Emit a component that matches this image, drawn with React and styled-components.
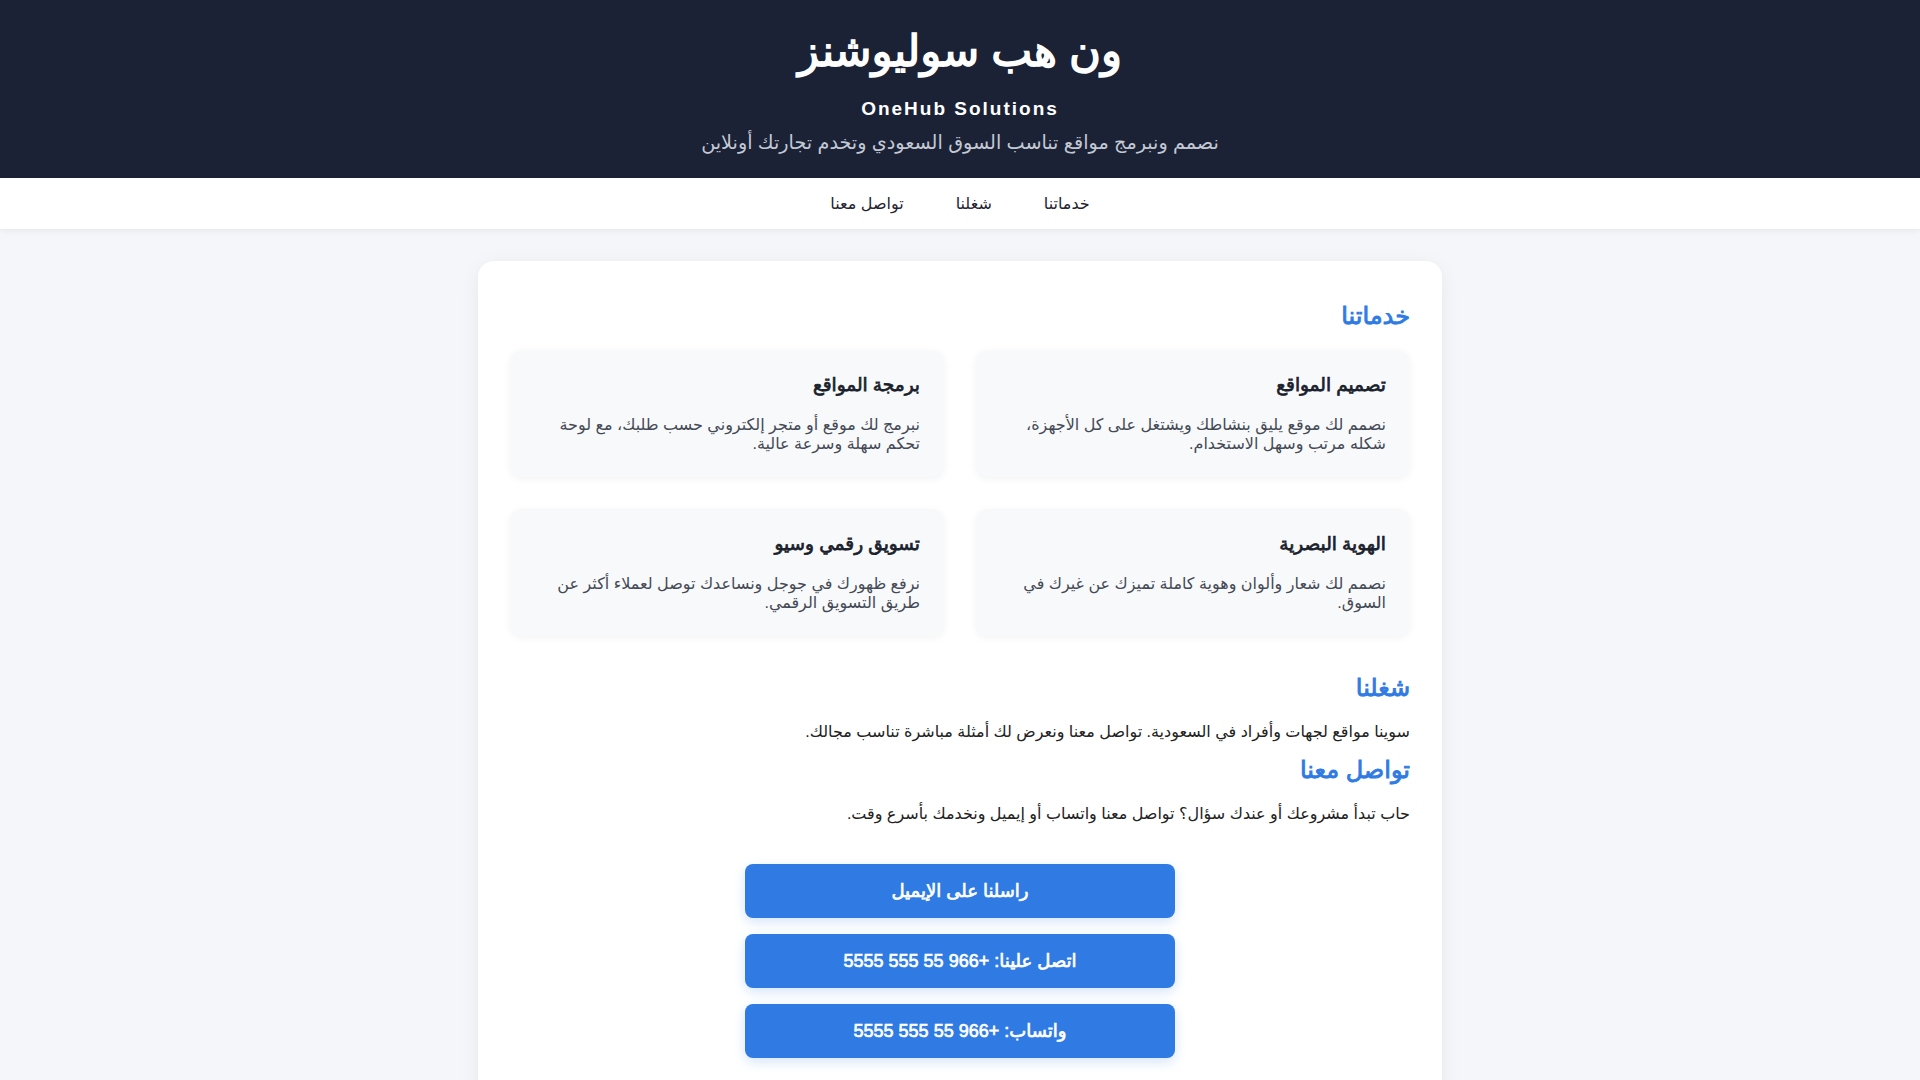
import React from "react";
import styled, { createGlobalStyle, css } from "styled-components";

const GlobalStyle = createGlobalStyle`
  body {
    margin: 0;
    background: #f4f6f9;
    font-family: "Liberation Sans", "DejaVu Sans", sans-serif;
    font-size: 16px;
    color: #1f2330;
  }
`;

// the arabic face here only has a light bold, so thicken the regular one
const heavy = (w) => css`
  font-weight: 400;
  -webkit-text-stroke: ${w}px currentColor;
`;

const services = [
  {
    title: "تصميم المواقع",
    text: "نصمم لك موقع يليق بنشاطك ويشتغل على كل الأجهزة، شكله مرتب وسهل الاستخدام.",
  },
  {
    title: "برمجة المواقع",
    text: "نبرمج لك موقع أو متجر إلكتروني حسب طلبك، مع لوحة تحكم سهلة وسرعة عالية.",
  },
  {
    title: "الهوية البصرية",
    text: "نصمم لك شعار وألوان وهوية كاملة تميزك عن غيرك في السوق.",
  },
  {
    title: "تسويق رقمي وسيو",
    text: "نرفع ظهورك في جوجل ونساعدك توصل لعملاء أكثر عن طريق التسويق الرقمي.",
  },
];

const App = () => {
  return (
    <Page dir="rtl">
      <GlobalStyle />
      <Header>
        <Title>ون هب سوليوشنز</Title>
        <Brand>OneHub Solutions</Brand>
        <Tagline>نصمم ونبرمج مواقع تناسب السوق السعودي وتخدم تجارتك أونلاين</Tagline>
      </Header>

      <Nav>
        <NavLink href="#services">خدماتنا</NavLink>
        <NavLink href="#work">شغلنا</NavLink>
        <NavLink href="#contact">تواصل معنا</NavLink>
      </Nav>

      <Main>
        <Section id="services">
          <SectionTitle>خدماتنا</SectionTitle>
          <Grid>
            {services.map((s) => (
              <Card key={s.title}>
                <CardTitle>{s.title}</CardTitle>
                <CardText>{s.text}</CardText>
              </Card>
            ))}
          </Grid>
        </Section>

        <Section id="work" $top={29}>
          <SectionTitle>شغلنا</SectionTitle>
          <Text>
            سوينا مواقع لجهات وأفراد في السعودية. تواصل معنا ونعرض لك أمثلة مباشرة تناسب مجالك.
          </Text>
        </Section>

        <Section id="contact" $top={6}>
          <SectionTitle>تواصل معنا</SectionTitle>
          <Text>حاب تبدأ مشروعك أو عندك سؤال؟ تواصل معنا واتساب أو إيميل ونخدمك بأسرع وقت.</Text>
          <Buttons>
            <Button href="#">راسلنا على الإيميل</Button>
            <Button href="#">اتصل علينا: +966 55 555 5555</Button>
            <Button href="#">واتساب: +966 55 555 5555</Button>
          </Buttons>
        </Section>
      </Main>
    </Page>
  );
};

export default App;

const Page = styled.div`
  min-height: 100vh;
`;

const Header = styled.header`
  background: #1b2236;
  color: #fff;
  text-align: center;
  padding: 26px 20px 0;
  height: 178px;
  box-sizing: border-box;
`;

const Title = styled.h1`
  margin: 0;
  font-size: 43.5px;
  line-height: normal;
  ${heavy(1.5)}
`;

const Brand = styled.div`
  margin-top: 22px;
  font-size: 19px;
  font-weight: 700;
  letter-spacing: 2px;
  direction: ltr;
`;

const Tagline = styled.p`
  margin: 11px 0 0;
  font-size: 19.2px;
  color: #c3c9d4;
`;

const Nav = styled.nav`
  background: #fff;
  height: 51px;
  display: flex;
  justify-content: center;
  align-items: center;
  gap: 52px;
  box-shadow: 0 2px 6px rgba(0, 0, 0, 0.06);
`;

const NavLink = styled.a`
  color: #1f2330;
  text-decoration: none;
  font-size: 16px;
`;

const Main = styled.main`
  max-width: 900px;
  margin: 32px auto 0;
  padding: 32px;
  background: #fff;
  border-radius: 16px;
  box-shadow: 0 4px 20px rgba(0, 0, 0, 0.06);
`;

const Section = styled.section`
  margin-top: ${(p) => p.$top || 0}px;
`;

const SectionTitle = styled.h2`
  margin: 0 0 20px;
  padding-top: 9px;
  color: #2f7be3;
  font-size: 24px;
  line-height: normal;
  ${heavy(0.9)}
`;

const Grid = styled.div`
  display: grid;
  grid-template-columns: 1fr 1fr;
  gap: 32px;
`;

const Card = styled.div`
  background: #f8f9fb;
  border-radius: 12px;
  padding: 24px;
  box-shadow: 0 2px 8px rgba(0, 0, 0, 0.05);
`;

const CardTitle = styled.h3`
  margin: 0 0 19px;
  font-size: 18.5px;
  line-height: normal;
  color: #1a1f2c;
  ${heavy(0.75)}
`;

const CardText = styled.p`
  margin: 0;
  font-size: 16px;
  color: #444a55;
`;

const Text = styled.p`
  margin: 0;
  font-size: 16px;
  color: #222;
`;

const Buttons = styled.div`
  display: flex;
  flex-direction: column;
  align-items: center;
  gap: 16px;
  margin-top: 41px;
  padding-bottom: 40px;
`;

const Button = styled.a`
  width: 430px;
  height: 54px;
  display: flex;
  align-items: center;
  justify-content: center;
  background: #2f7be3;
  color: #fff;
  border-radius: 8px;
  text-decoration: none;
  font-size: 18px;
  ${heavy(0.7)}
  box-shadow: 0 4px 12px rgba(47, 123, 227, 0.2);
`;
